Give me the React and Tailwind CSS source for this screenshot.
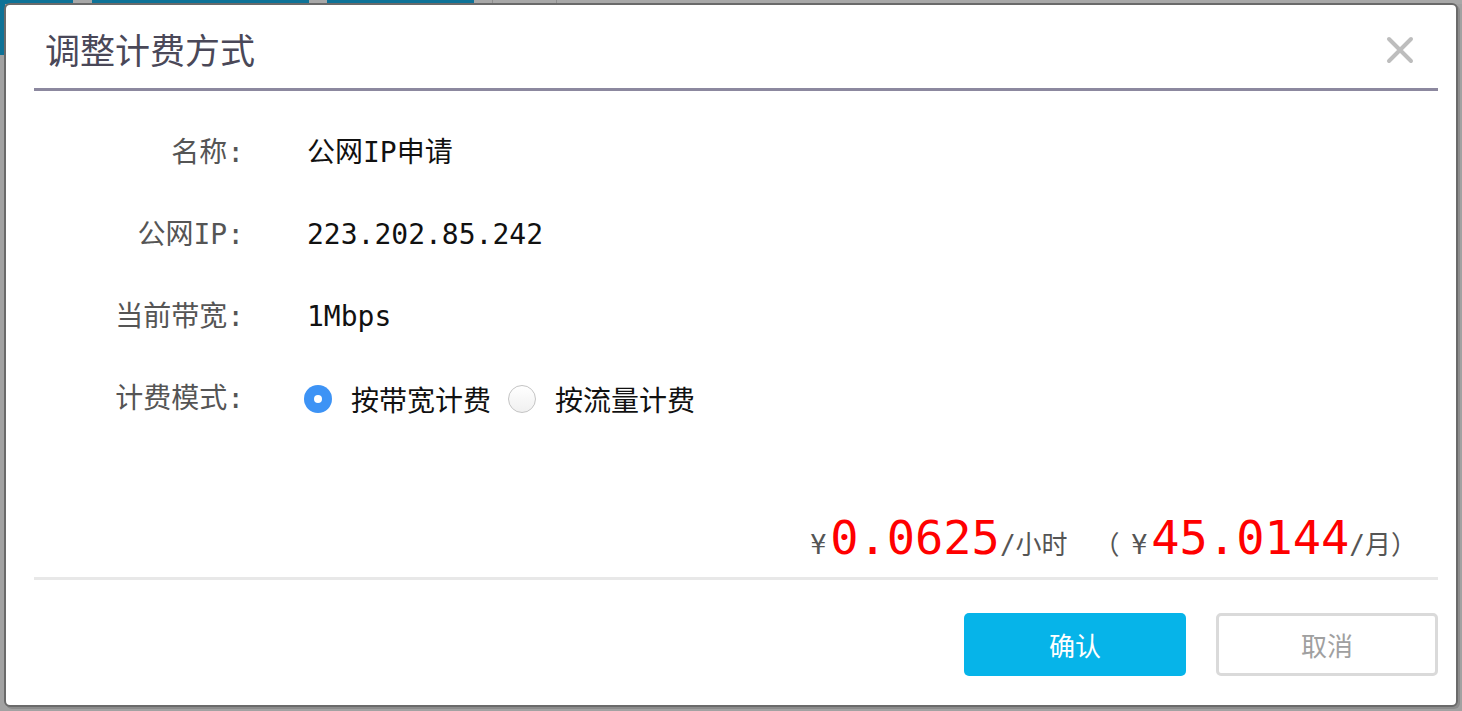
import React from "react";

const mono = { fontFamily: '"DejaVu Sans Mono", "Noto Sans CJK SC", monospace' };
const cjk = { fontFamily: '"Noto Sans CJK SC", sans-serif' };

function Row({ label, children }) {
  return (
    <div className="flex h-[82px] items-center">
      <div className="w-[238px] text-right text-[28px] text-[#555]" style={mono}>{label}</div>
      <div className="ml-[63px] flex items-center text-[28px] text-[#111]" style={mono}>{children}</div>
    </div>
  );
}

function Radio({ checked, label }) {
  return (
    <label className="flex items-center">
      {checked ? (
        <span className="flex h-[28px] w-[28px] items-center justify-center rounded-full bg-[#3d93f5]">
          <span className="h-[8px] w-[8px] rounded-full bg-white" />
        </span>
      ) : (
        <span className="h-[28px] w-[28px] rounded-full border-[1.5px] border-[#c4c4c4] bg-gradient-to-b from-white to-[#f0f0f0]" />
      )}
      <span className="ml-[19px] text-[28px] text-[#111]" style={cjk}>{label}</span>
    </label>
  );
}

export default function App() {
  return (
    <div className="relative h-[711px] w-[1462px] overflow-hidden bg-[#a2a2a2]">
      <div className="flex h-[4px]">
        <div className="w-[73px] bg-[#0e7297]" />
        <div className="w-[19px] bg-[#a8a8a8]" />
        <div className="w-[217px] bg-[#0e7297]" />
        <div className="w-[18px] bg-[#a8a8a8]" />
        <div className="w-[147px] bg-[#0e7297]" />
        <div className="w-[19px] border-r border-[#8f8f8f] bg-[#a8a8a8]" />
        <div className="w-[64px] border-r border-[#8f8f8f] bg-[#a8a8a8]" />
        <div className="flex-1 bg-[#a8a8a8]" />
      </div>
      <div className="h-[51px] w-[5px] bg-[#0e7297]" />

      <div className="absolute left-[4px] top-[3px] flex h-[704px] w-[1454px] flex-col rounded-[6px] border-2 border-[#6a6a6a] bg-white shadow-[2px_2px_0_#8c8c8c]">
        <div className="flex h-[83px] items-center justify-between pl-[39px] pr-[40px] pt-[6px]">
          <div className="text-[35px] text-[#4a4858]" style={cjk}>调整计费方式</div>
          <svg width="28" height="28" viewBox="0 0 28 28" className="mr-[2px]">
            <path d="M3 3 L25 25 M25 3 L3 25" stroke="#bdbdbd" strokeWidth="4" strokeLinecap="round" />
          </svg>
        </div>
        <div className="ml-[28px] mr-[18px] h-[3px] bg-[#8c889f]" />

        <div className="pt-[21px]">
          <Row label="名称:">公网IP申请</Row>
          <Row label="公网IP:">223.202.85.242</Row>
          <Row label="当前带宽:">1Mbps</Row>
          <div className="flex h-[82px] items-center">
            <div className="w-[238px] text-right text-[28px] text-[#555]" style={mono}>计费模式:</div>
            <div className="ml-[60px] flex items-center gap-[17px]">
              <Radio checked label="按带宽计费" />
              <Radio label="按流量计费" />
            </div>
          </div>
        </div>

        <div className="mr-[39px] mt-[74px] flex items-baseline justify-end text-[#555]" style={mono}>
          <span className="text-[26px]">¥</span>
          <span className="ml-[4px] text-[47px] leading-none text-[#ff0000]">0.0625</span>
          <span className="text-[26px]">/小时</span>
          <span className="ml-[26px] text-[26px]" style={cjk}>（</span>
          <span className="ml-[12px] text-[26px]">¥</span>
          <span className="ml-[4px] text-[47px] leading-none text-[#ff0000]">45.0144</span>
          <span className="text-[26px]">/月</span>
          <span className="text-[26px]" style={cjk}>）</span>
        </div>

        <div className="ml-[28px] mr-[18px] mt-[12px] h-[3px] bg-[#e8e8e8]" />

        <div className="mr-[18px] mt-[33px] flex justify-end gap-[30px]" style={cjk}>
          <button className="flex h-[63px] w-[222px] items-center justify-center rounded-[5px] bg-[#06b4e9] text-[26px] text-white">确认</button>
          <button className="flex h-[63px] w-[222px] items-center justify-center rounded-[5px] border-[3px] border-[#dadada] bg-white text-[26px] text-[#a0a0a0]">取消</button>
        </div>
      </div>
    </div>
  );
}
